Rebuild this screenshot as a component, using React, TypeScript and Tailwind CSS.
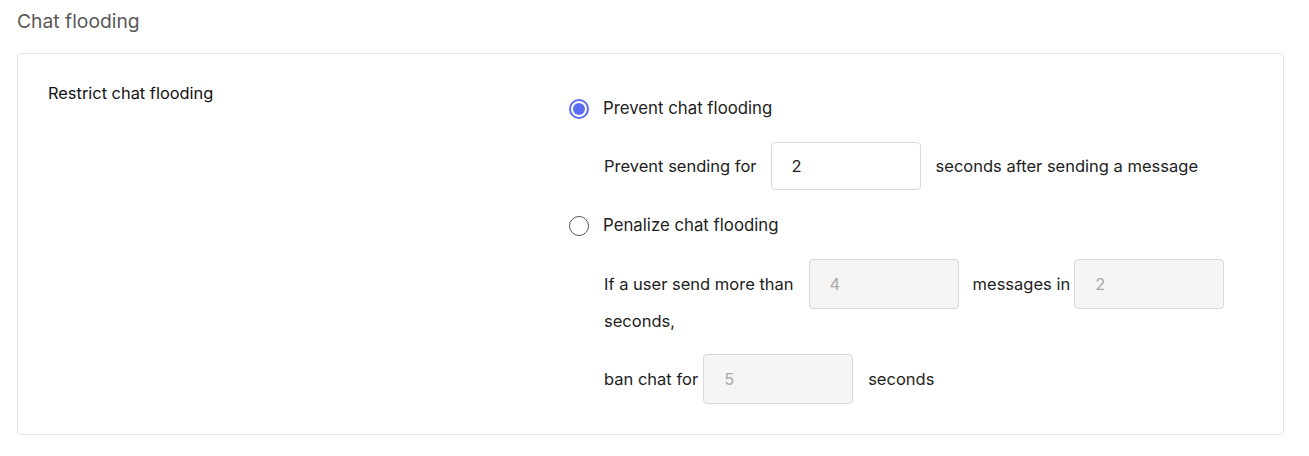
import type { ReactNode } from "react"

function Radio({ checked, children }: { checked?: boolean; children: ReactNode }) {
  return (
    <label className="flex items-center h-6 cursor-pointer">
      {checked ? (
        <span className="w-5 h-5 rounded-full border-2 border-[#5b6cf5] flex items-center justify-center">
          <span className="w-3 h-3 rounded-full bg-[#5b6cf5]" />
        </span>
      ) : (
        <span className="w-5 h-5 rounded-full border-[1.5px] border-[#555]" />
      )}
      <span className="ml-[14px] text-[16.8px] text-[#222]">{children}</span>
    </label>
  )
}

function NumInput({ value, disabled }: { value: string; disabled?: boolean }) {
  return (
    <input
      readOnly
      value={value}
      disabled={disabled}
      className={
        disabled
          ? "w-[150px] h-[50px] rounded border border-[#d9d9d9] bg-[#f5f5f5] px-5 text-[16.5px] text-[#aaa] outline-none"
          : "w-[150px] h-[48px] rounded border border-[#d9d9d9] bg-white px-5 text-[16.5px] text-[#222] outline-none"
      }
    />
  )
}

export default function App() {
  return (
    <div className="w-[1309px] h-[456px] bg-white font-['Inter',sans-serif] px-[17px] pt-[9px]">
      <div className="text-[19.3px] text-[#595959] leading-[24px] h-[44px]">Chat flooding</div>
      <div className="border border-[#e3e3e3] rounded w-[1267px] h-[382px] flex pl-[30px] pt-[29px]">
        <div className="w-[521px] text-[16.4px] text-[#111] leading-[20px]">Restrict chat flooding</div>
        <div className="flex flex-col pt-[14px] text-[16.5px] text-[#222]">
          <Radio checked>Prevent chat flooding</Radio>
          <div className="flex items-center mt-[21px] ml-[35px]">
            <span>Prevent sending for</span>
            <span className="ml-[14px]">
              <NumInput value="2" />
            </span>
            <span className="ml-[15px]">seconds after sending a message</span>
          </div>
          <div className="mt-[24px]">
            <Radio>Penalize chat flooding</Radio>
          </div>
          <div className="flex flex-wrap items-center mt-[21px] ml-[35px] w-[630px]">
            <span>If a user send more than</span>
            <span className="ml-[15px]">
              <NumInput value="4" disabled />
            </span>
            <span className="ml-[14px]">messages in</span>
            <span className="ml-[4px]">
              <NumInput value="2" disabled />
            </span>
          </div>
          <div className="ml-[35px] leading-[24px]">seconds,</div>
          <div className="flex items-center mt-[21px] ml-[35px]">
            <span>ban chat for</span>
            <span className="ml-[5px]">
              <NumInput value="5" disabled />
            </span>
            <span className="ml-[15px]">seconds</span>
          </div>
        </div>
      </div>
    </div>
  )
}
